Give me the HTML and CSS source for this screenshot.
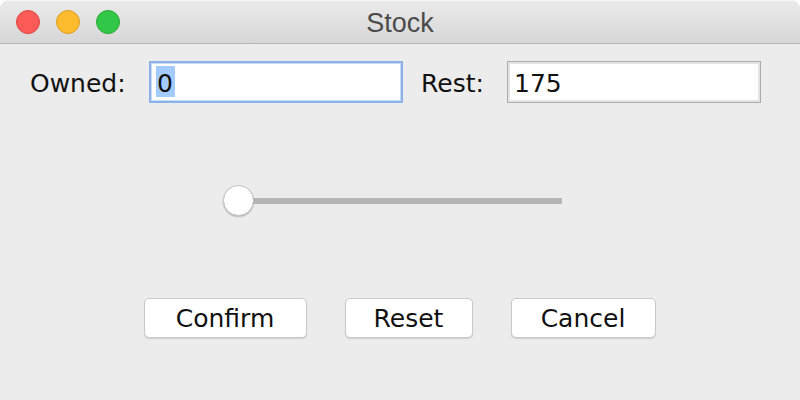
FILE: index.html
```html
<!DOCTYPE html>
<html lang="en">
<head>
<meta charset="utf-8">
<title>Stock</title>
<link rel="stylesheet" href="styles.css">
</head>
<body>
<div class="window">
  <header class="titlebar">
    <div class="lights">
      <span class="light red"></span>
      <span class="light yellow"></span>
      <span class="light green"></span>
    </div>
    <div class="title">Stock</div>
    <div class="spacer"></div>
  </header>
  <main class="content">
    <div class="fields">
      <label class="label label-owned">Owned:</label>
      <div class="field focused"><span class="sel">0</span></div>
      <label class="label label-rest">Rest:</label>
      <div class="field">175</div>
    </div>
    <div class="slider">
      <div class="track"></div>
      <div class="thumb"></div>
    </div>
    <div class="buttons">
      <button class="btn btn-confirm">Confirm</button>
      <button class="btn btn-reset">Reset</button>
      <button class="btn btn-cancel">Cancel</button>
    </div>
  </main>
</div>
</body>
</html>
```

FILE: styles.css
```css
* { box-sizing: border-box; }

html, body {
  margin: 0;
  padding: 0;
  background: #ffffff;
}

body {
  width: 800px;
  height: 400px;
  overflow: hidden;
  font-family: "DejaVu Sans", "Noto Sans", sans-serif;
  font-size: 25px;
  color: #111111;
}

.window {
  width: 800px;
  height: 400px;
  background: #ececec;
  border-radius: 9px 9px 0 0;
  overflow: hidden;
  display: flex;
  flex-direction: column;
}

.titlebar {
  height: 44px;
  flex: none;
  display: grid;
  grid-template-columns: 1fr auto 1fr;
  align-items: center;
  background: linear-gradient(#ebebeb, #d6d6d6);
  border-bottom: 1px solid #b4b4b4;
  box-shadow: inset 0 1px 0 #f6f6f6;
}

.lights {
  display: flex;
  gap: 16px;
  padding-left: 16px;
}

.light {
  width: 24px;
  height: 24px;
  border-radius: 50%;
  display: block;
}
.red { background: #fc5b57; border: 1px solid #e0443f; }
.yellow { background: #fdbb2e; border: 1px solid #de9d24; }
.green { background: #33c748; border: 1px solid #26a934; }

.title {
  font-family: "Liberation Sans", Arial, sans-serif;
  font-size: 27px;
  color: #4b4b4b;
  line-height: 30px;
  padding-top: 2px;
}

.content {
  flex: 1;
  display: flex;
  flex-direction: column;
  align-items: flex-start;
}

.fields {
  margin-top: 17px;
  padding-left: 30px;
  display: flex;
  align-items: flex-start;
  height: 42px;
}

.label {
  padding-top: 7px;
  line-height: 31px;
  color: #111111;
}
.label-owned { width: 119px; }
.label-rest { width: 86px; margin-left: 18px; }

.field {
  width: 254px;
  height: 42px;
  background: #ffffff;
  border: 1px solid #ababab;
  box-shadow: inset 0 0 0 2px #e4e4e4;
  padding: 6px 7px 0 6px;
  line-height: 31px;
  color: #111111;
}

.field.focused {
  border: 2px solid #8ab4e9;
  box-shadow: inset 0 0 0 1px #c8dcf4;
  padding: 5px 7px 0 5px;
}

.sel {
  display: inline-block;
  background: #a4cbfe;
  margin-top: -2px;
  padding: 2px 2px 0 1px;
  height: 31px;
  line-height: 31px;
}

.slider {
  margin-top: 82px;
  margin-left: 223px;
  width: 339px;
  height: 32px;
  position: relative;
  display: flex;
  align-items: center;
}

.track {
  margin-left: 16px;
  width: 323px;
  height: 6px;
  background: #b5b5b5;
  border-radius: 1px;
}

.thumb {
  position: absolute;
  left: 0;
  top: 0;
  width: 31px;
  height: 31px;
  border-radius: 50%;
  background: #ffffff;
  border: 1px solid #c2c2c2;
  box-shadow: 0 1px 1.5px rgba(0, 0, 0, 0.22);
}

.buttons {
  margin-top: 81px;
  align-self: stretch;
  display: flex;
  justify-content: center;
  gap: 38px;
  padding-right: 1px;
}

.btn {
  height: 40px;
  font-family: "DejaVu Sans", "Noto Sans", sans-serif;
  font-size: 25px;
  color: #111111;
  background: #ffffff;
  border: 1px solid #c9c9c9;
  border-radius: 5px;
  box-shadow: 0 1px 1px rgba(0, 0, 0, 0.12);
  padding: 1px 0 0 0;
  line-height: 31px;
  margin: 0;
}
.btn-confirm { width: 163px; }
.btn-reset { width: 128px; }
.btn-cancel { width: 145px; }
```
